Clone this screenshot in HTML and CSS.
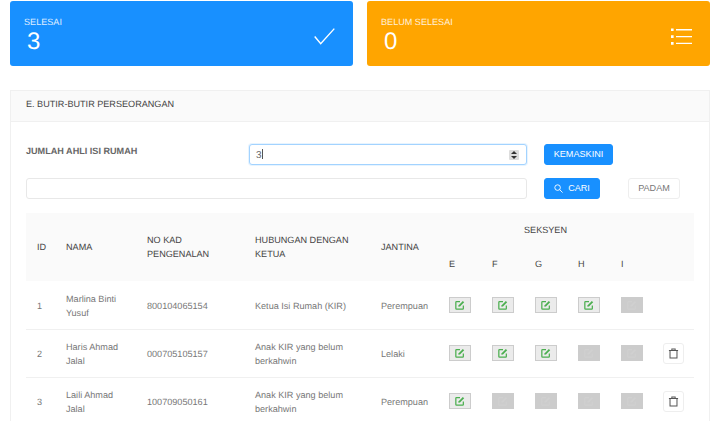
FILE: index.html
```html
<!DOCTYPE html>
<html lang="ms">
<head>
<meta charset="utf-8">
<title>Butir-butir Perseorangan</title>
<link rel="stylesheet" href="styles.css">
</head>
<body>
<svg class="sprites" width="0" height="0" aria-hidden="true">
  <symbol id="edit" viewBox="0 0 12 12">
    <path d="M10 6.500V10.200a.8.8 0 0 1-.8.8H1.800a.8.8 0 0 1-.8-.8V2.800A.8.8 0 0 1 1.800 2H6" fill="none" stroke="currentColor" stroke-width="1.500"/>
    <path d="M4 8.200l.4-2L9.400 1.200l1.600 1.600-5 5z" fill="currentColor"/>
  </symbol>
  <symbol id="trash" viewBox="0 0 12 12">
    <path d="M1 2.700h10M4.200 2.500V1h3.600v1.500M2.200 2.700V11h7.600V2.700" fill="none" stroke="currentColor" stroke-width="1.100"/>
  </symbol>
</svg>
<div class="stats">
  <div class="stat stat-blue">
    <div>
      <div class="stat-label">SELESAI</div>
      <div class="stat-value">3</div>
    </div>
    <svg class="stat-icon" width="21" height="17" viewBox="0 0 21 17"><path d="M.7 8.500l6 7.300L20.300.6" fill="none" stroke="#fff" stroke-width="1.400"/></svg>
  </div>
  <div class="stat stat-orange">
    <div>
      <div class="stat-label">BELUM SELESAI</div>
      <div class="stat-value">0</div>
    </div>
    <svg class="stat-icon" width="21" height="17" viewBox="0 0 21 17"><path d="M0 .5h2.600v2.600H0zM0 7.300h2.600v2.600H0zM0 14.100h2.600v2.600H0z" fill="#fff"/><path d="M5 1.800h16M5 8.600h16M5 15.400h16" fill="none" stroke="#fff" stroke-width="1.400"/></svg>
  </div>
</div>

<section class="panel">
  <header class="panel-head">E. BUTIR-BUTIR PERSEORANGAN</header>
  <div class="panel-body">
    <div class="form-row">
      <label class="form-label">JUMLAH AHLI ISI RUMAH</label>
      <div class="field field-focus"><span class="field-text">3</span><span class="caret"></span>
        <span class="spinner"><i class="up"></i><i class="down"></i></span>
      </div>
      <button class="btn btn-primary">KEMASKINI</button>
    </div>
    <div class="form-row form-row-search">
      <div class="field field-search"></div>
      <button class="btn btn-primary btn-search">
        <svg width="9" height="9" viewBox="0 0 10 10"><circle cx="4" cy="4" r="3.100" fill="none" stroke="#fff" stroke-width="1"/><path d="M6.300 6.300L9.500 9.500" stroke="#fff" stroke-width="1"/></svg>
        CARI
      </button>
      <button class="btn btn-plain">PADAM</button>
    </div>

    <table class="grid">
      <colgroup>
        <col class="c-id"><col class="c-name"><col class="c-ic"><col class="c-rel"><col class="c-sex">
        <col class="c-sec"><col class="c-sec"><col class="c-sec"><col class="c-sec"><col class="c-sec"><col class="c-del">
      </colgroup>
      <thead>
        <tr>
          <th rowspan="2">ID</th>
          <th rowspan="2">NAMA</th>
          <th rowspan="2">NO KAD PENGENALAN</th>
          <th rowspan="2">HUBUNGAN DENGAN KETUA</th>
          <th rowspan="2">JANTINA</th>
          <th colspan="5" class="th-center">SEKSYEN</th>
          <th rowspan="2"></th>
        </tr>
        <tr>
          <th>E</th><th>F</th><th>G</th><th>H</th><th>I</th>
        </tr>
      </thead>
      <tbody>
        <tr>
          <td>1</td><td>Marlina Binti Yusuf</td><td>800104065154</td><td>Ketua Isi Rumah (KIR)</td><td>Perempuan</td>
          <td><span class="sec sec-on"><svg width="10" height="10"><use href="#edit"/></svg></span></td>
          <td><span class="sec sec-on"><svg width="10" height="10"><use href="#edit"/></svg></span></td>
          <td><span class="sec sec-on"><svg width="10" height="10"><use href="#edit"/></svg></span></td>
          <td><span class="sec sec-on"><svg width="10" height="10"><use href="#edit"/></svg></span></td>
          <td><span class="sec sec-off"><svg width="10" height="10"><use href="#edit"/></svg></span></td>
          <td></td>
        </tr>
        <tr>
          <td>2</td><td>Haris Ahmad Jalal</td><td>000705105157</td><td>Anak KIR yang belum berkahwin</td><td>Lelaki</td>
          <td><span class="sec sec-on"><svg width="10" height="10"><use href="#edit"/></svg></span></td>
          <td><span class="sec sec-on"><svg width="10" height="10"><use href="#edit"/></svg></span></td>
          <td><span class="sec sec-on"><svg width="10" height="10"><use href="#edit"/></svg></span></td>
          <td><span class="sec sec-off"><svg width="10" height="10"><use href="#edit"/></svg></span></td>
          <td><span class="sec sec-off"><svg width="10" height="10"><use href="#edit"/></svg></span></td>
          <td><span class="del"><svg width="11" height="11"><use href="#trash"/></svg></span></td>
        </tr>
        <tr>
          <td>3</td><td>Laili Ahmad Jalal</td><td>100709050161</td><td>Anak KIR yang belum berkahwin</td><td>Perempuan</td>
          <td><span class="sec sec-on"><svg width="10" height="10"><use href="#edit"/></svg></span></td>
          <td><span class="sec sec-off"><svg width="10" height="10"><use href="#edit"/></svg></span></td>
          <td><span class="sec sec-off"><svg width="10" height="10"><use href="#edit"/></svg></span></td>
          <td><span class="sec sec-off"><svg width="10" height="10"><use href="#edit"/></svg></span></td>
          <td><span class="sec sec-off"><svg width="10" height="10"><use href="#edit"/></svg></span></td>
          <td><span class="del"><svg width="11" height="11"><use href="#trash"/></svg></span></td>
        </tr>
      </tbody>
    </table>
  </div>
</section>
</body>
</html>
```
FILE: styles.css
```css
* { box-sizing: border-box; }
html, body { height: 421px; overflow: hidden; }
body {
  margin: 0;
  padding: 1px 13px 0 10px;
  background: #fff;
  font-family: "Liberation Sans", Arial, sans-serif;
  font-size: 9.1px;
  color: #777;
  text-rendering: geometricPrecision;
}
.sprites { position: absolute; }
.stats { display: flex; gap: 14px; margin-bottom: 24px; }
.stat {
  flex: 1;
  height: 65px;
  border-radius: 3px;
  padding: 15px 18px 0 14px;
  display: flex;
  justify-content: space-between;
  color: #fff;
}
.stat-blue { background: #1890ff; }
.stat-orange { background: #ffa500; }
.stat-label { font-size: 9.1px; line-height: 12px; opacity: .85; }
.stat-value { font-size: 24px; line-height: 27px; padding-left: 3px; }
.stat-icon { margin-top: 12px; }
.panel { border: 1px solid #f0f0f0; height: 340px; }
.panel-head {
  height: 31px;
  background: #fafafa;
  border-bottom: 1px solid #f0f0f0;
  color: #444;
  line-height: 27px;
  padding-left: 15px;
}
.panel-body { padding: 22px 15px 0; }
.form-row { display: flex; align-items: flex-start; height: 21px; }
.form-row-search { margin-top: 13px; margin-bottom: 14px; }
.form-label { width: 223px; font-weight: 700; font-size: 9.1px; line-height: 14px; color: #666; }
.field {
  position: relative;
  height: 21px;
  width: 278px;
  border: 1px solid #e8e8e8;
  border-radius: 3px;
  background: #fff;
  line-height: 20px;
  padding-left: 6px;
  margin-right: 17px;
  color: #666;
}
.field-focus { border-color: #a3d3ff; box-shadow: 0 0 0 1px rgba(24,144,255,.1); }
.field-search { width: 501px; }
.field-text { font-size: 10px; }
.caret { display: inline-block; width: 1px; height: 10px; background: #555; vertical-align: -1px; }
.spinner {
  position: absolute;
  right: 7px;
  top: 5px;
  width: 10px;
  height: 10px;
  background: #ddd;
  border-radius: 1px;
}
.spinner i { position: absolute; left: 2px; border-left: 3px solid transparent; border-right: 3px solid transparent; }
.spinner .up { top: 1px; border-bottom: 3px solid #333; }
.spinner .down { bottom: 1px; border-top: 3px solid #333; }
.btn {
  height: 21px;
  border-radius: 3px;
  font: 9.1px/19px "Liberation Sans", Arial, sans-serif;
  padding: 0;
  display: inline-flex;
  align-items: center;
  justify-content: center;
}
.btn-primary { width: 69px; background: #1890ff; border: 1px solid #1890ff; color: #fff; }
.btn-search { width: 56px; gap: 5px; margin-right: 28px; }
.btn-plain { width: 52px; background: #fff; border: 1px solid #eee; color: #777; }
.grid { width: 668px; table-layout: fixed; border-collapse: collapse; }
.c-id { width: 29px; }
.c-name { width: 81px; }
.c-ic { width: 108px; }
.c-rel { width: 126px; }
.c-sex { width: 68px; }
.c-sec { width: 43px; }
.c-del { width: 41px; }
.grid th {
  background: #fafafa;
  font-weight: 400;
  color: #444;
  text-align: left;
  padding: 0 11px;
  line-height: 14px;
  height: 34px;
}
.grid .th-center { text-align: center; }
.grid td {
  height: 48px;
  padding: 2px 11px 0;
  line-height: 14px;
  border-bottom: 1px solid #f0f0f0;
  vertical-align: middle;
}
.sec {
  display: flex;
  width: 22px;
  height: 16px;
  margin-top: -2px;
  align-items: center;
  justify-content: center;
  border: 1px solid #ccc;
}
.sec-on { background: #ebebeb; color: #4caf50; }
.sec-off { background: #ccc; color: #d0d0d0; }
.del {
  display: flex;
  width: 21px;
  height: 21px;
  margin: -2px 0 0 -1px;
  align-items: center;
  justify-content: center;
  border: 1px solid #eee;
  border-radius: 3px;
  color: #555;
}
```
